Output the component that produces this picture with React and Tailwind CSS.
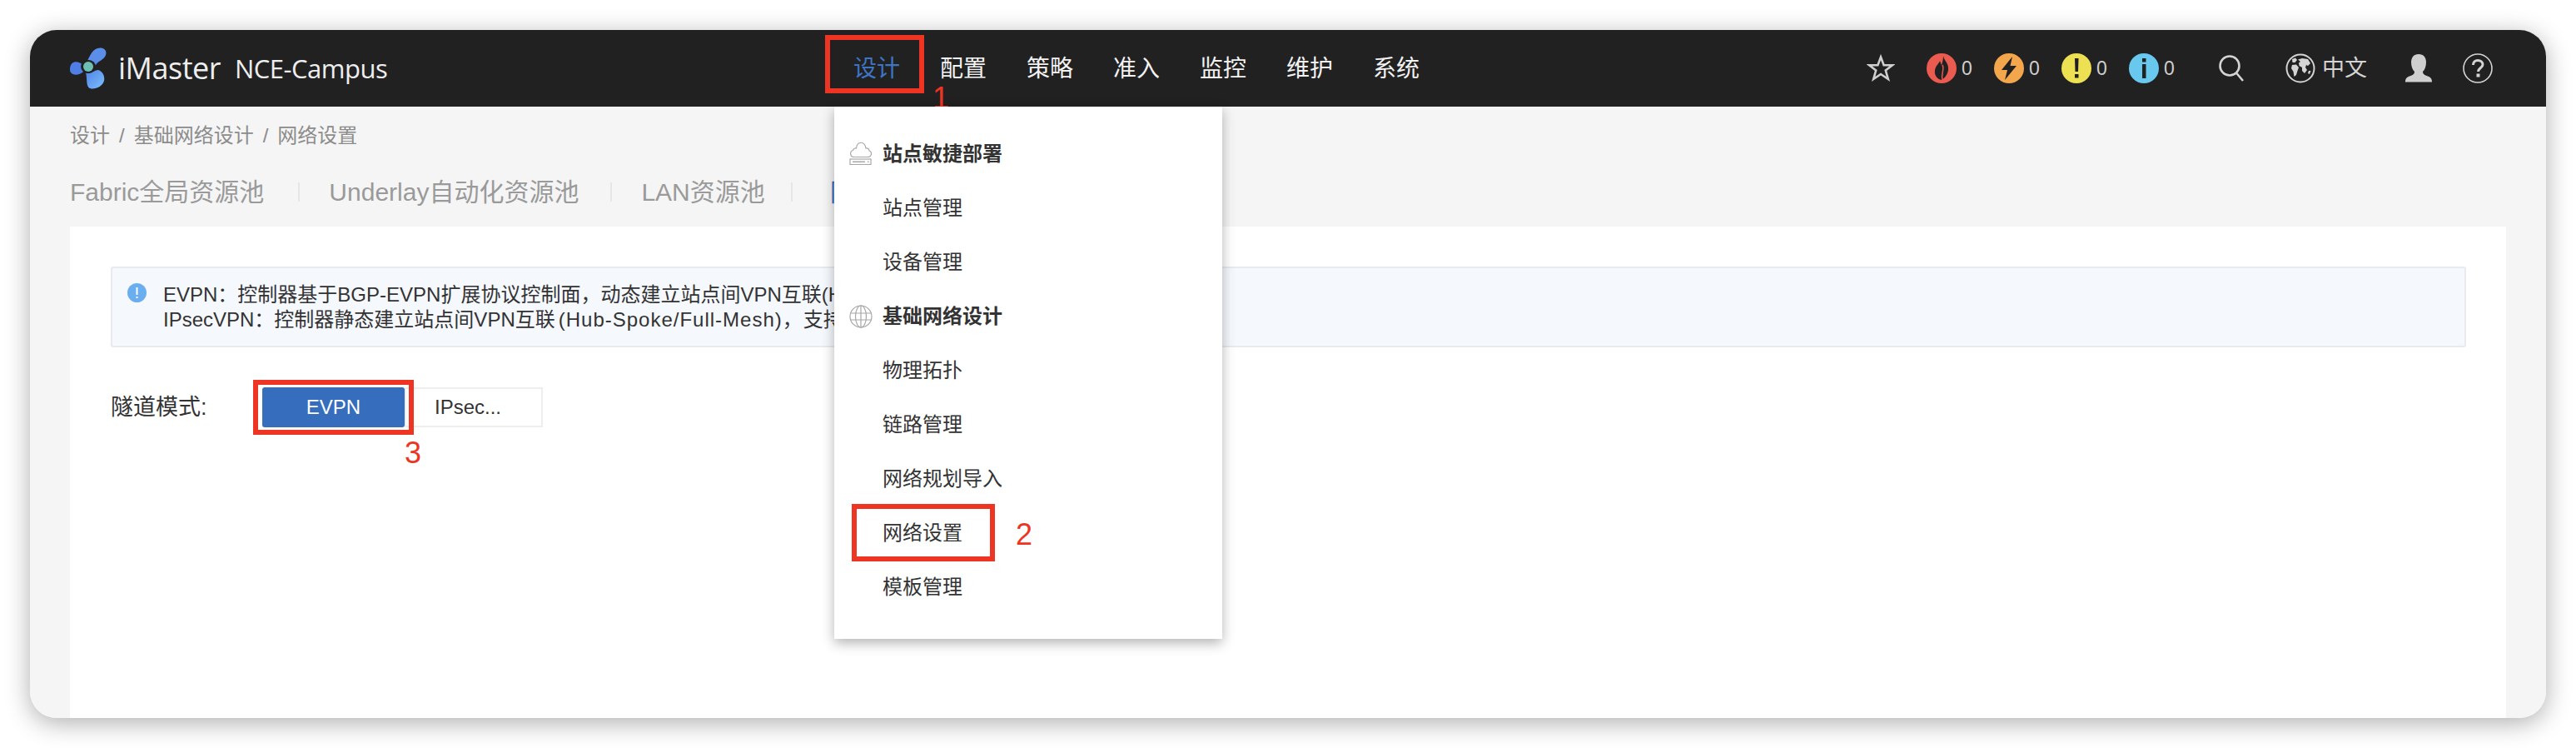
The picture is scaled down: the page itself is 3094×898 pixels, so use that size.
const CJK = "font-['Liberation_Sans','Noto_Sans_CJK_SC',sans-serif]";

const navItems = ["设计", "配置", "策略", "准入", "监控", "维护", "系统"];

const menu = [
  { label: "站点敏捷部署", head: "cloud" },
  { label: "站点管理" },
  { label: "设备管理" },
  { label: "基础网络设计", head: "globe" },
  { label: "物理拓扑" },
  { label: "链路管理" },
  { label: "网络规划导入" },
  { label: "网络设置" },
  { label: "模板管理" },
];

const Logo = () => (
  <svg width="44" height="50" viewBox="0 0 44 50">
    <defs>
      <linearGradient id="lobe" x1="0" y1="0" x2="1" y2="1">
        <stop offset="0" stopColor="#4f82e8" />
        <stop offset="1" stopColor="#7cc0fa" />
      </linearGradient>
    </defs>
    <path d="M20 17C24 12 25 4 33 1C40-1 45 3 43 9C41 15 34 16 31 21C29 24 22 22 20 17Z" fill="#5a8ee9" />
    <path d="M17 21C13 19 8 16 4 18C0 20-1 27 1 30C4 34 11 33 15 30C18 28 19 24 17 21Z" fill="#4f7fe6" />
    <path d="M19 30C22 33 30 27 34 27C40 29 42 35 41 40C39 47 30 51 24 49C19 47 21 38 19 30Z" fill="url(#lobe)" />
    <ellipse cx="22" cy="23" rx="9" ry="8" fill="#212121" />
    <ellipse cx="22" cy="23" rx="6" ry="6" fill="#6dbfb4" />
  </svg>
);

const Star = () => (
  <svg width="34" height="34" viewBox="0 0 34 34" fill="none" stroke="#cfcfcf" strokeWidth="2.6" strokeLinejoin="miter">
    <path d="M17 3.5L20.6 13.2H31L22.8 19.6L25.8 30L17 24L8.2 30L11.2 19.6L3 13.2H13.4Z" />
  </svg>
);

const Badge = ({ color, count, children }) => (
  <div className="flex items-center w-[81px]">
    <svg width="36" height="36" viewBox="0 0 36 36">
      <circle cx="18" cy="18" r="18" fill={color} />
      {children}
    </svg>
    <span className="ml-[6px] text-[23px] leading-none text-[#cfcfcf]">{count}</span>
  </div>
);

const Search = () => (
  <svg width="30" height="32" viewBox="0 0 30 32" fill="none" stroke="#d4d4d4" strokeWidth="2.6">
    <circle cx="13" cy="13" r="11.5" />
    <path d="M21 21.500L29 31" />
  </svg>
);

const World = () => (
  <svg width="36" height="36" viewBox="0 0 36 36">
    <circle cx="18" cy="18" r="16.5" fill="none" stroke="#d4d4d4" strokeWidth="2" />
    <path
      d="M8 7L12 5.5L14 8L11.5 11L8.5 11ZM8 14L13 13.5L16 17L14.5 21L13 26L10.5 28L9.5 22L7 18ZM15 7.5L20 6L27 7L30 12L27 15L25 14L24 17L26 20L23 24L20 21L20 17L16.5 15L16 11.5L18 10ZM28 21L30.5 21L29 25L27 24Z"
      fill="#d4d4d4"
    />
  </svg>
);

const Person = () => (
  <svg width="34" height="34" viewBox="0 0 34 34">
    <path
      d="M17 0C23 0 26 4 26 10C26 15 24 19 22 21C22 24 24 25 28 26.500C32 28 33 30 33 33.500H1C1 30 2 28 6 26.500C10 25 12 24 12 21C10 19 8 15 8 10C8 4 11 0 17 0Z"
      fill="#cfcfcf"
    />
  </svg>
);

const Help = () => (
  <svg width="36" height="36" viewBox="0 0 36 36" fill="none" stroke="#d4d4d4">
    <circle cx="18" cy="18" r="17" strokeWidth="1.6" />
    <path d="M12.5 14C12.500 10.500 15 8.500 18 8.500C21.500 8.500 24 10.500 24 13.500C24 17.500 18.500 17.500 18.500 22" strokeWidth="3" />
    <rect x="16.500" y="24.500" width="4" height="4" fill="#d4d4d4" stroke="none" />
  </svg>
);

const CloudIcon = () => (
  <svg width="28" height="28" viewBox="0 0 28 28" fill="none" stroke="#a8a8a8" strokeWidth="1.200" className="-mt-[2px]">
    <path d="M6 18.500C1 18.500 0 12 4.500 10.500C5 8.500 7 7.500 8.500 8C9.500 -1 18.500 -1 20 8C22 7.500 24 9 24 11C28 12.500 27 18.500 22 18.500Z" />
    <rect x="1" y="21" width="25" height="6.500" />
    <path d="M4 24.300H19" strokeWidth="1.500" />
    <path d="M22 24.300H23.500" strokeWidth="1.500" />
  </svg>
);

const GlobeIcon = () => (
  <svg width="28" height="28" viewBox="0 0 28 28" fill="none" stroke="#a8a8a8" strokeWidth="1.200">
    <circle cx="14" cy="14" r="13" />
    <ellipse cx="14" cy="14" rx="6.500" ry="13" />
    <path d="M14 1V27M1.500 10H26.500M1.500 18H26.500" />
  </svg>
);

const InfoIcon = () => (
  <svg width="23" height="23" viewBox="0 0 23 23">
    <circle cx="11.500" cy="11.500" r="11.500" fill="#6aaef0" />
    <rect x="10.500" y="5" width="2" height="9" fill="#ffffff" />
    <rect x="10.500" y="16" width="2" height="2" fill="#ffffff" />
  </svg>
);

const Callout = ({ className }) => (
  <div className={`absolute border-[6px] border-[#ee3524] ${className}`} />
);

export default function App() {
  return (
    <div className={`min-h-screen bg-white p-[36px] ${CJK}`}>
      <div className="relative flex flex-col h-[826px] rounded-[32px] overflow-hidden shadow-[0_6px_30px_rgba(0,0,0,0.32)]">
        <header className="flex items-center h-[92px] shrink-0 bg-[#212121] pl-[48px]">
          <Logo />
          <span className="w-[124px] ml-[14px] text-[36px] text-[#eeeeee] font-['Open_Sans',sans-serif] tracking-[-0.5px]">iMaster</span>
          <span className="w-[183px] ml-[16px] text-[31px] text-[#eeeeee] font-['Open_Sans',sans-serif] tracking-[-0.5px] whitespace-nowrap">NCE-Campus</span>
          <nav className="flex gap-[48px] ml-[560px] mt-[1px]">
            {navItems.map((n, i) => (
              <span key={n} className={`text-[28px] leading-none ${i === 0 ? "text-[#3f74c4]" : "text-[#f2f2f2]"}`}>
                {n}
              </span>
            ))}
          </nav>
          <div className="flex items-center ml-auto pr-[64px]">
            <Star />
            <div className="flex ml-[38px]">
              <Badge color="#ec5b50" count="0">
                <path d="M20 3C21 9 27 12 26 20C25 27 20 31 18 32C13 31 9 27 10 20C11 15 15 12 16 9C17 11 17 13 18 14C19 11 20 7 20 3Z" fill="#212121" />
                <path d="M19 14C22 19 17 24 19 32" stroke="#ec5b50" strokeWidth="1.500" fill="none" />
              </Badge>
              <Badge color="#f3a64c" count="0">
                <path d="M22 4L9 20H16L13 32L27 15H19.500Z" fill="#212121" />
              </Badge>
              <Badge color="#ede053" count="0">
                <path d="M16 6H20.500L20 22H16.500Z" fill="#212121" />
                <rect x="16" y="25" width="4.500" height="4.500" fill="#212121" />
              </Badge>
              <Badge color="#68c8ee" count="0">
                <rect x="16" y="6" width="4.500" height="4.500" fill="#212121" />
                <rect x="16" y="13" width="4.500" height="17" fill="#212121" />
              </Badge>
            </div>
            <div className="ml-[27px]">
              <Search />
            </div>
            <div className="ml-[50px]">
              <World />
            </div>
            <span className="ml-[8px] text-[27px] leading-none text-[#d4d4d4]">中文</span>
            <div className="ml-[45px]">
              <Person />
            </div>
            <div className="ml-[36px]">
              <Help />
            </div>
          </div>
        </header>

        <main className="flex flex-col flex-1 bg-[#f5f5f5] px-[48px] pt-[20px]">
          <div className="flex gap-[11px] text-[24px] leading-[30px] text-[#8c8c8c]">
            <span>设计</span>
            <span>/</span>
            <span>基础网络设计</span>
            <span>/</span>
            <span>网络设置</span>
          </div>
          <div className="flex items-center h-[40px] mt-[32px] text-[30px] text-[#9a9a9a]">
            <span>Fabric全局资源池</span>
            <span className="w-[2px] h-[23px] bg-[#e6e6e6] ml-[41px] mr-[35px]" />
            <span>Underlay自动化资源池</span>
            <span className="w-[2px] h-[23px] bg-[#e6e6e6] ml-[38px] mr-[35px]" />
            <span>LAN资源池</span>
            <span className="w-[2px] h-[23px] bg-[#e6e6e6] ml-[31px] mr-[45px]" />
            <span className="text-[#3f74c4]">网</span>
          </div>
          <section className="flex-1 bg-white mt-[22px] pl-[49px] pr-[48px] pt-[48px]">
            <div className="flex h-[97px] border-2 border-[#e8eaee] rounded-[3px] bg-[#f5f8fd] pl-[18px] pt-[18px]">
              <InfoIcon />
              <div className="ml-[20px] text-[24px] leading-[30px] text-[#333333] whitespace-nowrap">
                <div className="-mt-[1px]">EVPN：控制器基于BGP-EVPN扩展协议控制面，动态建立站点间VPN互联(Hub)</div>
                <div>
                  IPsecVPN：控制器静态建立站点间VPN互联
                  <span className="ml-[4px] tracking-[1px]">(Hub-Spoke/Full-Mesh)，</span>
                  支持
                </div>
              </div>
            </div>
            <div className="flex items-center mt-[48px]">
              <span className="w-[182px] text-[27px] text-[#333333]">隧道模式:</span>
              <button className="w-[171px] h-[48px] rounded-[3px] bg-[#366dbc] text-[24px] text-white">EVPN</button>
              <div className="w-[166px] h-[48px] border-2 border-[#eeeeee] pl-[34px] text-[24px] leading-[44px] text-[#333333]">IPsec...</div>
            </div>
          </section>
        </main>

        <span className="absolute left-[1084px] top-[62px] text-[36px] leading-[40px] text-[#ee3524] font-['Liberation_Sans',sans-serif]">1</span>

        <div className="absolute left-[966px] top-[92px] w-[466px] h-[639px] bg-white pt-[24px] shadow-[0_5px_14px_rgba(0,0,0,0.3)]">
          {menu.map((m) => (
            <div key={m.label} className={`flex items-center h-[65px] text-[24px] text-[#333333] ${m.head ? "pl-[18px] font-bold" : "pl-[58px]"}`}>
              {m.head === "cloud" && <CloudIcon />}
              {m.head === "globe" && <GlobeIcon />}
              <span className={m.head ? "ml-[12px]" : ""}>{m.label}</span>
            </div>
          ))}
        </div>

        <Callout className="left-[955px] top-[6px] w-[119px] h-[70px]" />
        <Callout className="left-[987px] top-[569px] w-[172px] h-[69px]" />
        <span className="absolute left-[1184px] top-[586px] text-[36px] leading-[40px] text-[#ee3524] font-['Liberation_Sans',sans-serif]">2</span>
        <Callout className="left-[268px] top-[420px] w-[193px] h-[66px]" />
        <span className="absolute left-[450px] top-[488px] text-[36px] leading-[40px] text-[#ee3524] font-['Liberation_Sans',sans-serif]">3</span>
      </div>
    </div>
  );
}
